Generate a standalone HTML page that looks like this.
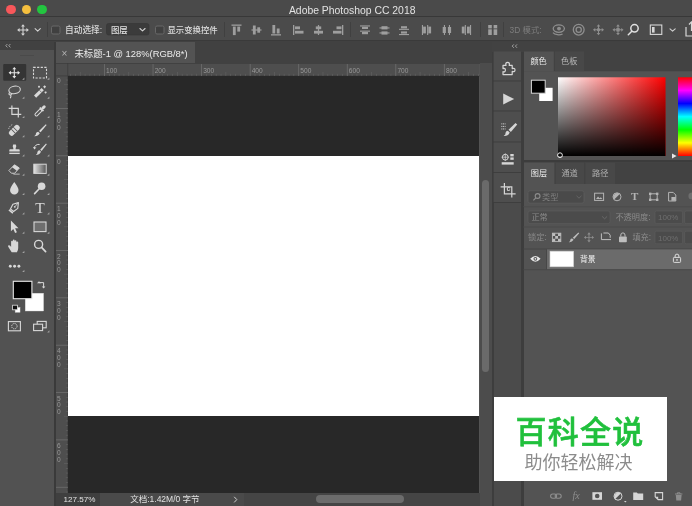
<!DOCTYPE html>
<html><head><meta charset="utf-8">
<style>
*{box-sizing:border-box;margin:0;padding:0}
html,body{width:692px;height:506px;overflow:hidden;background:#535353;font-family:"Liberation Sans","Noto Sans CJK SC",sans-serif;}
#root{position:relative;width:692px;height:506px;overflow:hidden;background:#535353;filter:blur(0.35px)}
.abs{position:absolute}
.t{position:absolute;white-space:nowrap;color:#ddd;font-size:9px;line-height:11px}
</style></head><body>
<div id="root">
<!-- title bar -->
<div class="abs" style="left:0;top:0;width:692px;height:17px;background:#4a4a4a;border-bottom:1px solid #383838"></div>
<div class="abs" style="left:6.4px;top:4.6px;width:9.8px;height:9.8px;border-radius:5px;background:#f8575a"></div>
<div class="abs" style="left:21.7px;top:4.6px;width:9.8px;height:9.8px;border-radius:5px;background:#f5bf3e"></div>
<div class="abs" style="left:37px;top:4.6px;width:9.8px;height:9.8px;border-radius:5px;background:#23c540"></div>
<div class="t" style="left:0;width:692px;text-align:center;padding-left:12.4px;top:4.5px;font-size:10.4px;color:#e2e2e2;line-height:12px">Adobe Photoshop CC 2018</div>
<!-- options bar -->
<div class="abs" style="left:0;top:17px;width:692px;height:24px;background:#4b4b4b;border-bottom:1px solid #3a3a3a"></div>
<svg class="abs" style="left:0px;top:0px" width="692" height="42" viewBox="0 0 692 42" ><g transform="translate(23,30) scale(0.9)" fill="#d4d4d4" stroke="none"><path d="M0-6.5 L2.2-3.8 H0.6 V-0.6 H3.8 V-2.2 L6.5 0 L3.8 2.2 V0.6 H0.6 V3.8 H2.2 L0 6.5 L-2.2 3.8 H-0.6 V0.6 H-3.8 V2.2 L-6.5 0 L-3.8-2.2 V-0.6 H-0.6 V-3.8 H-2.2 Z"/></g><path d="M35.1 28.7 L37.7 31.1 L40.300000000000004 28.7" fill="none" stroke="#d4d4d4" stroke-width="1.1" stroke-linecap="round" stroke-linejoin="round"/><rect x="47" y="22" width="1" height="15" fill="#404040"/><rect x="224" y="22" width="1" height="15" fill="#404040"/><rect x="350" y="22" width="1" height="15" fill="#404040"/><rect x="480" y="22" width="1" height="15" fill="#404040"/><rect x="503" y="22" width="1" height="15" fill="#404040"/><rect x="51.5" y="26" width="8.5" height="8" rx="1.5" fill="#404040" stroke="#686868" stroke-width="1"/><rect x="155.5" y="26" width="8.5" height="8" rx="1.5" fill="#404040" stroke="#686868" stroke-width="1"/><rect x="106.5" y="23.5" width="42.5" height="11.5" rx="2" fill="#3b3b3b" stroke="#363636" stroke-width="0.6"/><path d="M139.9 28.5 L142.5 30.900000000000002 L145.1 28.5" fill="none" stroke="#d4d4d4" stroke-width="1.1" stroke-linecap="round" stroke-linejoin="round"/><rect x="231.5" y="24.5" width="10" height="1.3" fill="#9e9e9e"/><rect x="232.9" y="26.6" width="2.8" height="8.5" fill="#9e9e9e"/><rect x="237.3" y="26.6" width="2.8" height="5" fill="#9e9e9e"/><rect x="251.5" y="29.4" width="10" height="1.2" fill="#9e9e9e"/><rect x="252.9" y="25.5" width="2.8" height="9" fill="#9e9e9e"/><rect x="257.3" y="27.3" width="2.8" height="5.4" fill="#9e9e9e"/><rect x="271" y="34.2" width="10" height="1.3" fill="#9e9e9e"/><rect x="272.4" y="25" width="2.8" height="8.5" fill="#9e9e9e"/><rect x="276.8" y="28.5" width="2.8" height="5" fill="#9e9e9e"/><rect x="293" y="25" width="1.3" height="10" fill="#9e9e9e"/><rect x="295" y="26.4" width="5" height="2.8" fill="#9e9e9e"/><rect x="295" y="30.8" width="8.5" height="2.8" fill="#9e9e9e"/><rect x="317.9" y="25" width="1.2" height="10" fill="#9e9e9e"/><rect x="315.8" y="26.4" width="5.4" height="2.8" fill="#9e9e9e"/><rect x="314.0" y="30.8" width="9" height="2.8" fill="#9e9e9e"/><rect x="342" y="25" width="1.3" height="10" fill="#9e9e9e"/><rect x="336.5" y="26.4" width="5" height="2.8" fill="#9e9e9e"/><rect x="333" y="30.8" width="8.5" height="2.8" fill="#9e9e9e"/><rect x="360" y="25.4" width="10" height="1.1" fill="#9e9e9e"/><rect x="362" y="26.8" width="6" height="2.2" fill="#9e9e9e"/><rect x="360" y="30.6" width="10" height="1.1" fill="#9e9e9e"/><rect x="362" y="32" width="6" height="2.2" fill="#9e9e9e"/><rect x="379.5" y="27.4" width="10" height="1.1" fill="#9e9e9e"/><rect x="381.5" y="26.2" width="6" height="3.2" fill="#9e9e9e"/><rect x="379.5" y="32.4" width="10" height="1.1" fill="#9e9e9e"/><rect x="381.5" y="31.4" width="6" height="3.2" fill="#9e9e9e"/><rect x="399" y="28.8" width="10" height="1.1" fill="#9e9e9e"/><rect x="401" y="26.2" width="6" height="2.2" fill="#9e9e9e"/><rect x="399" y="34" width="10" height="1.1" fill="#9e9e9e"/><rect x="401" y="31.4" width="6" height="2.2" fill="#9e9e9e"/><rect x="421.9" y="25" width="1.1" height="10" fill="#9e9e9e"/><rect x="423.1" y="26.6" width="2.8" height="6.8" fill="#9e9e9e"/><rect x="427.1" y="25" width="1.1" height="10" fill="#9e9e9e"/><rect x="428.3" y="26.6" width="2.8" height="6.8" fill="#9e9e9e"/><rect x="443.9" y="25" width="1.1" height="10" fill="#9e9e9e"/><rect x="442.7" y="27" width="3.2" height="6" fill="#9e9e9e"/><rect x="448.9" y="25" width="1.1" height="10" fill="#9e9e9e"/><rect x="447.9" y="27" width="3.2" height="6" fill="#9e9e9e"/><rect x="464.8" y="25" width="1.1" height="10" fill="#9e9e9e"/><rect x="461.8" y="26.6" width="2.8" height="6.8" fill="#9e9e9e"/><rect x="470" y="25" width="1.1" height="10" fill="#9e9e9e"/><rect x="467" y="26.6" width="2.8" height="6.8" fill="#9e9e9e"/><rect x="488.2" y="25" width="3.6" height="10" fill="#9e9e9e"/><rect x="493.59999999999997" y="25" width="3.6" height="10" fill="#9e9e9e"/><rect x="487.7" y="28.4" width="10" height="0.9" fill="#4c4c4c"/><g fill="none" stroke="#8e8e8e" stroke-width="1.3"><ellipse cx="558.8" cy="28.6" rx="5.6" ry="3.7"/><path d="M553 32.6 a6.4 4 0 0 0 9.6 1.4"/><circle cx="559" cy="28.6" r="1.3" fill="#8e8e8e"/></g><g fill="none" stroke="#8e8e8e" stroke-width="1.3"><circle cx="578.7" cy="29.7" r="5.4"/><circle cx="578.7" cy="29.7" r="2.6"/></g><g transform="translate(598.5,29.8) scale(0.85)" fill="#8e8e8e" stroke="none"><path d="M0-6.5 L2.2-3.8 H0.6 V-0.6 H3.8 V-2.2 L6.5 0 L3.8 2.2 V0.6 H0.6 V3.8 H2.2 L0 6.5 L-2.2 3.8 H-0.6 V0.6 H-3.8 V2.2 L-6.5 0 L-3.8-2.2 V-0.6 H-0.6 V-3.8 H-2.2 Z"/></g><circle cx="598.5" cy="29.8" r="1.8" fill="#8e8e8e"/><g transform="translate(618,29.8) scale(0.85)" fill="#8e8e8e" stroke="none"><path d="M0-6.5 L2.2-3.8 H0.6 V-0.6 H3.8 V-2.2 L6.5 0 L3.8 2.2 V0.6 H0.6 V3.8 H2.2 L0 6.5 L-2.2 3.8 H-0.6 V0.6 H-3.8 V2.2 L-6.5 0 L-3.8-2.2 V-0.6 H-0.6 V-3.8 H-2.2 Z"/></g><rect x="616.3" y="28.1" width="3.4" height="3.4" fill="#8e8e8e"/><g fill="none" stroke="#e0e0e0" stroke-width="1.5"><circle cx="634.5" cy="28.3" r="3.7"/><path d="M631.8 31.2 L628.3 34.8" stroke-linecap="round"/></g><rect x="650.3" y="25" width="11.5" height="9.4" fill="none" stroke="#d8d8d8" stroke-width="1.1"/><rect x="652" y="27" width="2.6" height="5.6" fill="#d8d8d8"/><path d="M670.0 28.8 L672.6 31.200000000000003 L675.2 28.8" fill="none" stroke="#cfcfcf" stroke-width="1.1" stroke-linecap="round" stroke-linejoin="round"/><path d="M686 27 V36 H692 M689 24.5 L691.5 21.8 L694 24.5" fill="none" stroke="#d8d8d8" stroke-width="1.2"/><rect x="690.9" y="22" width="1.2" height="9" fill="#d8d8d8"/></svg>
<div class="t" style="left:65px;top:24.5px;font-size:8.7px;font-weight:500;color:#dcdcdc">自动选择:</div>
<div class="t" style="left:111px;top:24.5px;font-size:8.4px;font-weight:500;color:#e2e2e2">图层</div>
<div class="t" style="left:167.5px;top:24.5px;font-size:8.4px;font-weight:500;color:#dcdcdc">显示变换控件</div>
<div class="t" style="left:509.5px;top:24.5px;font-size:8.4px;color:#7d7d7d">3D 模式:</div>
<!-- tab bar -->
<div class="abs" style="left:0;top:41px;width:692px;height:23px;background:#414141"></div>
<!-- toolbar -->
<div class="abs" style="left:0;top:42px;width:54.3px;height:464px;background:#525252"></div>
<div class="abs" style="left:0;top:42px;width:54.3px;height:7.6px;background:#414141"></div>
<div class="abs" style="left:54.3px;top:42px;width:1.4px;height:464px;background:#3a3a3a"></div>
<svg class="abs" style="left:0px;top:0px" width="56" height="340" viewBox="0 0 56 340" ><path d="M7.4 44 L5.8 45.7 L7.4 47.4 M10.4 44 L8.8 45.7 L10.4 47.4" fill="none" stroke="#b5b5b5" stroke-width="0.8"/><rect x="20" y="55" width="14" height="1" fill="#4a4a4a"/><rect x="3.2" y="64" width="23" height="16.8" rx="1" fill="#343434"/><path d="M24.4 77.5 V79.7 H22.2 Z" fill="#a4a4a4"/><path d="M49.4 77.5 V79.7 H47.199999999999996 Z" fill="#a4a4a4"/><path d="M24.4 96.6 V98.8 H22.2 Z" fill="#a4a4a4"/><path d="M49.4 96.6 V98.8 H47.199999999999996 Z" fill="#a4a4a4"/><path d="M24.4 115.8 V118 H22.2 Z" fill="#a4a4a4"/><path d="M49.4 115.8 V118 H47.199999999999996 Z" fill="#a4a4a4"/><path d="M24.4 135.10000000000002 V137.3 H22.2 Z" fill="#a4a4a4"/><path d="M49.4 135.10000000000002 V137.3 H47.199999999999996 Z" fill="#a4a4a4"/><path d="M24.4 154.3 V156.5 H22.2 Z" fill="#a4a4a4"/><path d="M49.4 154.3 V156.5 H47.199999999999996 Z" fill="#a4a4a4"/><path d="M24.4 173.60000000000002 V175.8 H22.2 Z" fill="#a4a4a4"/><path d="M49.4 173.60000000000002 V175.8 H47.199999999999996 Z" fill="#a4a4a4"/><path d="M24.4 192.8 V195 H22.2 Z" fill="#a4a4a4"/><path d="M49.4 192.8 V195 H47.199999999999996 Z" fill="#a4a4a4"/><path d="M24.4 212.3 V214.5 H22.2 Z" fill="#a4a4a4"/><path d="M49.4 212.3 V214.5 H47.199999999999996 Z" fill="#a4a4a4"/><path d="M24.4 231.60000000000002 V233.8 H22.2 Z" fill="#a4a4a4"/><path d="M49.4 231.60000000000002 V233.8 H47.199999999999996 Z" fill="#a4a4a4"/><path d="M24.4 250.8 V253 H22.2 Z" fill="#a4a4a4"/><g transform="translate(14.3,72.7) scale(0.88)" fill="#e6e6e6" stroke="none"><path d="M0-6.5 L2.2-3.8 H0.6 V-0.6 H3.8 V-2.2 L6.5 0 L3.8 2.2 V0.6 H0.6 V3.8 H2.2 L0 6.5 L-2.2 3.8 H-0.6 V0.6 H-3.8 V2.2 L-6.5 0 L-3.8-2.2 V-0.6 H-0.6 V-3.8 H-2.2 Z"/></g><rect x="33.5" y="67.4" width="13" height="10.6" fill="none" stroke="#d8d8d8" stroke-width="1.1" stroke-dasharray="2.2 1.4"/><g fill="none" stroke="#d8d8d8" stroke-width="1.1"><ellipse cx="14.9" cy="90.0" rx="5.8" ry="3.7" transform="rotate(-10 14.3 91.8)"/><path d="M9.700000000000001 92.39999999999999 q-1.6 2 0.4 2.6 q1.6 0.2 1.2 -1.6 M10.700000000000001 94.8 q0.6 1.8 -0.4 3.4"/></g><g transform="translate(40,91.8)"><path d="M-6 3.8 L1.6 -3.8 L3.8 -1.6 L-3.8 6 Z" fill="#d8d8d8"/><path d="M-0.6 -1.6 L1.6 0.6" stroke="#535353" stroke-width="0.7"/><path d="M4.6 -6.4 v2.8 M3.2 -5 h2.8 M-1 -6 v2 M-2 -5 h2 M5.6 -0.4 v2 M4.6 0.6 h2" stroke="#d8d8d8" stroke-width="1.1" fill="none"/></g><g fill="none" stroke="#d8d8d8" stroke-width="1.2"><path d="M11.9 105.4 V114.4 H21.3"/><path d="M8.700000000000001 108.4 H18.3 V117.4"/></g><g transform="translate(40,111) rotate(45)"><rect x="-1.4" y="-1.6" width="2.8" height="8" rx="1.2" fill="none" stroke="#d8d8d8" stroke-width="1"/><rect x="-2.6" y="-3.2" width="5.2" height="1.8" fill="#d8d8d8"/><rect x="-1.5" y="-7.4" width="3" height="4.6" rx="1.4" fill="#d8d8d8"/></g><g transform="translate(14.3,130.3) rotate(-45)"><rect x="-6.4" y="-2.8" width="12.8" height="5.6" rx="2.4" fill="#d8d8d8"/><rect x="-1.8" y="-2.8" width="0.9" height="5.6" fill="#535353"/><rect x="1" y="-2.8" width="0.9" height="5.6" fill="#535353"/></g><path d="M8.700000000000001 128.9 a6 6 0 0 1 4 -4.4" fill="none" stroke="#d8d8d8" stroke-width="0.9" stroke-dasharray="1.2 1"/><g transform="translate(40,130.3)"><path d="M5.8 -6 L6.6 -5.2 L0.6 2 L-1 0.6 Z" fill="#d8d8d8"/><path d="M-1.8 1.4 L-0.2 3 Q-2 6.2 -5.8 6 Q-3.6 4.6 -4 3 Q-3.6 1.4 -1.8 1.4Z" fill="#d8d8d8"/></g><g transform="translate(14.5,149.5) scale(0.84)" fill="#d8d8d8"><path d="M-1.6 -6 h3.2 q1.2 2 -0.2 4.2 v1.6 h3.8 q1 0 1 1 v1.6 h-12.4 v-1.6 q0 -1 1 -1 h3.8 v-1.6 q-1.4 -2.2 -0.2 -4.2Z"/><rect x="-6.2" y="3.8" width="12.4" height="1.6"/></g><g transform="translate(40.6,149.5)"><path d="M5.4 -6 L6.2 -5.2 L1 1.4 L-0.4 0.2 Z" fill="#d8d8d8"/><path d="M-1 0.8 L0.4 2.2 Q-1.2 5.4 -4.8 5.4 Q-2.8 4 -3.2 2.6 Q-2.8 0.8 -1 0.8Z" fill="#d8d8d8"/><path d="M-6.4 -1.4 a4.4 4.4 0 0 1 5.4 -3.6" fill="none" stroke="#d8d8d8" stroke-width="1"/><path d="M-7.6 -2.6 l1.4 2.6 l2 -2 Z" fill="#d8d8d8"/></g><g transform="translate(14.3,169.10000000000002) scale(0.9)"><path d="M-6 1.6 L0.2 -4.8 L5.6 -1.2 L0.4 4.6 L-3.2 4.6 Z" fill="none" stroke="#d8d8d8" stroke-width="1"/><path d="M-2.4 -2 L0.2 -4.8 L5.6 -1.2 L2.8 1.8Z" fill="#d8d8d8"/><path d="M-1 5.6 H6" stroke="#d8d8d8" stroke-width="0.9"/></g><defs><linearGradient id="gtool" x1="0" x2="1"><stop offset="0" stop-color="#e4e4e4"/><stop offset="1" stop-color="#565656"/></linearGradient></defs><rect x="33.8" y="164.20000000000002" width="12.4" height="9.2" fill="url(#gtool)" stroke="#d8d8d8" stroke-width="1"/><path d="M14.3 182 Q18.9 188.2 18.5 190.4 A4.2 4.2 0 0 1 10.100000000000001 190.4 Q9.700000000000001 188.2 14.3 182Z" fill="#d8d8d8"/><g transform="translate(40,188)"><circle cx="1.6" cy="-1.8" r="3.8" fill="#d8d8d8"/><path d="M-1 1 L-5.4 5.6" stroke="#d8d8d8" stroke-width="1.6" stroke-linecap="round"/></g><g transform="translate(14.3,207.5) rotate(40)"><path d="M0 -6.4 L3.2 -1.6 L2 3.6 H-2 L-3.2 -1.6 Z" fill="none" stroke="#d8d8d8" stroke-width="1.1" stroke-linejoin="round"/><path d="M0 -6 V-1.4" stroke="#d8d8d8" stroke-width="0.8"/><circle cx="0" cy="-0.8" r="0.9" fill="#d8d8d8"/><rect x="-2.6" y="4.4" width="5.2" height="1.6" fill="#d8d8d8"/></g><path d="M10.9 220.60000000000002 L18.5 228.20000000000002 H15.100000000000001 L16.900000000000002 232.20000000000002 L15.100000000000001 233.0 L13.3 229.0 L10.9 231.20000000000002Z" fill="#d8d8d8"/><rect x="34" y="222.0" width="12" height="9.6" fill="#6e6e6e" stroke="#d8d8d8" stroke-width="1.1"/><g transform="translate(14.3,246)" fill="#d8d8d8"><path d="M-2.6 6.2 Q-4.6 3.4 -6.2 0.6 Q-6.6 -0.8 -5.2 -0.8 Q-4 -0.6 -3.2 1 V-4.2 Q-3.2 -5.2 -2.3 -5.2 Q-1.5 -5.2 -1.5 -4.2 V-5.4 Q-1.5 -6.4 -0.6 -6.4 Q0.3 -6.4 0.3 -5.4 V-4.8 Q0.3 -5.8 1.2 -5.8 Q2.1 -5.8 2.1 -4.8 V-3.6 Q2.1 -4.6 3 -4.6 Q3.9 -4.6 3.9 -3.6 V2 Q3.9 4.4 2.6 6.2Z"/></g><g fill="none" stroke="#d8d8d8" stroke-width="1.4"><circle cx="38.6" cy="244.4" r="4"/><path d="M41.6 247.4 L45.6 251.6" stroke-linecap="round" stroke-width="1.7"/></g><circle cx="10.3" cy="266.3" r="1.45" fill="#d8d8d8"/><circle cx="14.6" cy="266.3" r="1.45" fill="#d8d8d8"/><circle cx="18.9" cy="266.3" r="1.45" fill="#d8d8d8"/><path d="M24.4 269.8 V272 H22.2 Z" fill="#a4a4a4"/><rect x="25.2" y="293.2" width="18.4" height="17.8" fill="#fff" stroke="#d0d0d0" stroke-width="0.4"/><rect x="13.3" y="281.3" width="18.6" height="17.4" fill="#000" stroke="#e6e6e6" stroke-width="1.1"/><path d="M39 281.2 l-2 2 h4 Z M43.6 288.6 l-1.8 -2 h3.6 Z" fill="#d8d8d8"/><path d="M39 282.6 h4.6 v4.4" fill="none" stroke="#d8d8d8" stroke-width="1"/><rect x="15.2" y="307.6" width="4.8" height="4.6" fill="#fff" stroke="#ddd" stroke-width="0.5"/><rect x="12.6" y="305.2" width="4.8" height="4.6" fill="#111" stroke="#e0e0e0" stroke-width="0.8"/><rect x="8.4" y="321.6" width="12" height="9.2" fill="none" stroke="#d8d8d8" stroke-width="1.1"/><circle cx="14.4" cy="326.2" r="2.7" fill="none" stroke="#d8d8d8" stroke-width="1" stroke-dasharray="1.2 0.9"/><rect x="37.2" y="321.4" width="9" height="6.4" fill="#535353" stroke="#d8d8d8" stroke-width="1.1"/><rect x="33.6" y="324.2" width="9" height="6.4" fill="#535353" stroke="#d8d8d8" stroke-width="1.1"/><path d="M49.4 330.3 V332.5 H47.199999999999996 Z" fill="#a4a4a4"/></svg>
<div class="t" style="left:34px;top:198.5px;font-family:'Liberation Serif',serif;font-size:15.5px;line-height:18px;color:#d8d8d8;width:12px;text-align:center">T</div>
<!-- doc tab -->
<div class="abs" style="left:56px;top:42px;width:139px;height:21px;background:#535353"></div>
<div class="t" style="left:61.6px;top:47.6px;font-size:10px;color:#b4b4b4">×</div>
<div class="t" style="left:74.4px;top:47.8px;font-size:9.4px;color:#ececec">未标题-1 @ 128%(RGB/8*)</div>
<!-- rulers -->
<div class="abs" style="left:55.7px;top:63.7px;width:423.7px;height:12.3px;background:#4e4e4e"></div>
<div class="abs" style="left:55.7px;top:64px;width:12.3px;height:429.4px;background:#4e4e4e"></div>
<svg class="abs" style="left:0px;top:0px" width="492" height="506" viewBox="0 0 492 506" ><rect x="56" y="75.5" width="424" height="0.8" fill="#3d3d3d"/><rect x="67.4" y="63" width="0.8" height="430" fill="#3d3d3d"/><rect x="70.22" y="73.8" width="0.6" height="2.2" fill="#636363"/><rect x="75.07" y="73.8" width="0.6" height="2.2" fill="#636363"/><rect x="79.92" y="72" width="0.6" height="4" fill="#636363"/><rect x="84.78" y="73.8" width="0.6" height="2.2" fill="#636363"/><rect x="89.64" y="73.8" width="0.6" height="2.2" fill="#636363"/><rect x="94.49" y="73.8" width="0.6" height="2.2" fill="#636363"/><rect x="99.35" y="73.8" width="0.6" height="2.2" fill="#636363"/><rect x="104.10" y="64" width="0.8" height="12" fill="#6e6e6e"/><rect x="109.06" y="73.8" width="0.6" height="2.2" fill="#636363"/><rect x="113.91" y="73.8" width="0.6" height="2.2" fill="#636363"/><rect x="118.77" y="73.8" width="0.6" height="2.2" fill="#636363"/><rect x="123.62" y="73.8" width="0.6" height="2.2" fill="#636363"/><rect x="128.47" y="72" width="0.6" height="4" fill="#636363"/><rect x="133.33" y="73.8" width="0.6" height="2.2" fill="#636363"/><rect x="138.19" y="73.8" width="0.6" height="2.2" fill="#636363"/><rect x="143.04" y="73.8" width="0.6" height="2.2" fill="#636363"/><rect x="147.89" y="73.8" width="0.6" height="2.2" fill="#636363"/><rect x="152.65" y="64" width="0.8" height="12" fill="#6e6e6e"/><rect x="157.60" y="73.8" width="0.6" height="2.2" fill="#636363"/><rect x="162.46" y="73.8" width="0.6" height="2.2" fill="#636363"/><rect x="167.31" y="73.8" width="0.6" height="2.2" fill="#636363"/><rect x="172.17" y="73.8" width="0.6" height="2.2" fill="#636363"/><rect x="177.03" y="72" width="0.6" height="4" fill="#636363"/><rect x="181.88" y="73.8" width="0.6" height="2.2" fill="#636363"/><rect x="186.74" y="73.8" width="0.6" height="2.2" fill="#636363"/><rect x="191.59" y="73.8" width="0.6" height="2.2" fill="#636363"/><rect x="196.44" y="73.8" width="0.6" height="2.2" fill="#636363"/><rect x="201.20" y="64" width="0.8" height="12" fill="#6e6e6e"/><rect x="206.15" y="73.8" width="0.6" height="2.2" fill="#636363"/><rect x="211.01" y="73.8" width="0.6" height="2.2" fill="#636363"/><rect x="215.86" y="73.8" width="0.6" height="2.2" fill="#636363"/><rect x="220.72" y="73.8" width="0.6" height="2.2" fill="#636363"/><rect x="225.57" y="72" width="0.6" height="4" fill="#636363"/><rect x="230.43" y="73.8" width="0.6" height="2.2" fill="#636363"/><rect x="235.28" y="73.8" width="0.6" height="2.2" fill="#636363"/><rect x="240.14" y="73.8" width="0.6" height="2.2" fill="#636363"/><rect x="244.99" y="73.8" width="0.6" height="2.2" fill="#636363"/><rect x="249.75" y="64" width="0.8" height="12" fill="#6e6e6e"/><rect x="254.70" y="73.8" width="0.6" height="2.2" fill="#636363"/><rect x="259.56" y="73.8" width="0.6" height="2.2" fill="#636363"/><rect x="264.41" y="73.8" width="0.6" height="2.2" fill="#636363"/><rect x="269.27" y="73.8" width="0.6" height="2.2" fill="#636363"/><rect x="274.12" y="72" width="0.6" height="4" fill="#636363"/><rect x="278.98" y="73.8" width="0.6" height="2.2" fill="#636363"/><rect x="283.83" y="73.8" width="0.6" height="2.2" fill="#636363"/><rect x="288.69" y="73.8" width="0.6" height="2.2" fill="#636363"/><rect x="293.54" y="73.8" width="0.6" height="2.2" fill="#636363"/><rect x="298.30" y="64" width="0.8" height="12" fill="#6e6e6e"/><rect x="303.25" y="73.8" width="0.6" height="2.2" fill="#636363"/><rect x="308.11" y="73.8" width="0.6" height="2.2" fill="#636363"/><rect x="312.96" y="73.8" width="0.6" height="2.2" fill="#636363"/><rect x="317.82" y="73.8" width="0.6" height="2.2" fill="#636363"/><rect x="322.67" y="72" width="0.6" height="4" fill="#636363"/><rect x="327.53" y="73.8" width="0.6" height="2.2" fill="#636363"/><rect x="332.38" y="73.8" width="0.6" height="2.2" fill="#636363"/><rect x="337.24" y="73.8" width="0.6" height="2.2" fill="#636363"/><rect x="342.09" y="73.8" width="0.6" height="2.2" fill="#636363"/><rect x="346.85" y="64" width="0.8" height="12" fill="#6e6e6e"/><rect x="351.80" y="73.8" width="0.6" height="2.2" fill="#636363"/><rect x="356.66" y="73.8" width="0.6" height="2.2" fill="#636363"/><rect x="361.51" y="73.8" width="0.6" height="2.2" fill="#636363"/><rect x="366.37" y="73.8" width="0.6" height="2.2" fill="#636363"/><rect x="371.22" y="72" width="0.6" height="4" fill="#636363"/><rect x="376.08" y="73.8" width="0.6" height="2.2" fill="#636363"/><rect x="380.93" y="73.8" width="0.6" height="2.2" fill="#636363"/><rect x="385.79" y="73.8" width="0.6" height="2.2" fill="#636363"/><rect x="390.64" y="73.8" width="0.6" height="2.2" fill="#636363"/><rect x="395.40" y="64" width="0.8" height="12" fill="#6e6e6e"/><rect x="400.35" y="73.8" width="0.6" height="2.2" fill="#636363"/><rect x="405.21" y="73.8" width="0.6" height="2.2" fill="#636363"/><rect x="410.06" y="73.8" width="0.6" height="2.2" fill="#636363"/><rect x="414.92" y="73.8" width="0.6" height="2.2" fill="#636363"/><rect x="419.77" y="72" width="0.6" height="4" fill="#636363"/><rect x="424.63" y="73.8" width="0.6" height="2.2" fill="#636363"/><rect x="429.48" y="73.8" width="0.6" height="2.2" fill="#636363"/><rect x="434.34" y="73.8" width="0.6" height="2.2" fill="#636363"/><rect x="439.19" y="73.8" width="0.6" height="2.2" fill="#636363"/><rect x="443.95" y="64" width="0.8" height="12" fill="#6e6e6e"/><rect x="448.90" y="73.8" width="0.6" height="2.2" fill="#636363"/><rect x="453.76" y="73.8" width="0.6" height="2.2" fill="#636363"/><rect x="458.61" y="73.8" width="0.6" height="2.2" fill="#636363"/><rect x="463.47" y="73.8" width="0.6" height="2.2" fill="#636363"/><rect x="468.32" y="72" width="0.6" height="4" fill="#636363"/><rect x="473.18" y="73.8" width="0.6" height="2.2" fill="#636363"/><rect x="478.03" y="73.8" width="0.6" height="2.2" fill="#636363"/><rect x="65.8" y="79.74" width="2.2" height="0.6" fill="#636363"/><rect x="64" y="84.48" width="4" height="0.6" fill="#636363"/><rect x="65.8" y="89.21" width="2.2" height="0.6" fill="#636363"/><rect x="65.8" y="93.95" width="2.2" height="0.6" fill="#636363"/><rect x="65.8" y="98.68" width="2.2" height="0.6" fill="#636363"/><rect x="65.8" y="103.42" width="2.2" height="0.6" fill="#636363"/><rect x="56" y="108.05" width="12" height="0.8" fill="#6e6e6e"/><rect x="65.8" y="112.89" width="2.2" height="0.6" fill="#636363"/><rect x="65.8" y="117.62" width="2.2" height="0.6" fill="#636363"/><rect x="65.8" y="122.36" width="2.2" height="0.6" fill="#636363"/><rect x="65.8" y="127.09" width="2.2" height="0.6" fill="#636363"/><rect x="64" y="131.83" width="4" height="0.6" fill="#636363"/><rect x="65.8" y="136.56" width="2.2" height="0.6" fill="#636363"/><rect x="65.8" y="141.30" width="2.2" height="0.6" fill="#636363"/><rect x="65.8" y="146.03" width="2.2" height="0.6" fill="#636363"/><rect x="65.8" y="150.77" width="2.2" height="0.6" fill="#636363"/><rect x="56" y="155.40" width="12" height="0.8" fill="#6e6e6e"/><rect x="65.8" y="160.24" width="2.2" height="0.6" fill="#636363"/><rect x="65.8" y="164.97" width="2.2" height="0.6" fill="#636363"/><rect x="65.8" y="169.71" width="2.2" height="0.6" fill="#636363"/><rect x="65.8" y="174.44" width="2.2" height="0.6" fill="#636363"/><rect x="64" y="179.18" width="4" height="0.6" fill="#636363"/><rect x="65.8" y="183.91" width="2.2" height="0.6" fill="#636363"/><rect x="65.8" y="188.64" width="2.2" height="0.6" fill="#636363"/><rect x="65.8" y="193.38" width="2.2" height="0.6" fill="#636363"/><rect x="65.8" y="198.12" width="2.2" height="0.6" fill="#636363"/><rect x="56" y="202.75" width="12" height="0.8" fill="#6e6e6e"/><rect x="65.8" y="207.59" width="2.2" height="0.6" fill="#636363"/><rect x="65.8" y="212.32" width="2.2" height="0.6" fill="#636363"/><rect x="65.8" y="217.06" width="2.2" height="0.6" fill="#636363"/><rect x="65.8" y="221.79" width="2.2" height="0.6" fill="#636363"/><rect x="64" y="226.53" width="4" height="0.6" fill="#636363"/><rect x="65.8" y="231.26" width="2.2" height="0.6" fill="#636363"/><rect x="65.8" y="236.00" width="2.2" height="0.6" fill="#636363"/><rect x="65.8" y="240.73" width="2.2" height="0.6" fill="#636363"/><rect x="65.8" y="245.47" width="2.2" height="0.6" fill="#636363"/><rect x="56" y="250.10" width="12" height="0.8" fill="#6e6e6e"/><rect x="65.8" y="254.94" width="2.2" height="0.6" fill="#636363"/><rect x="65.8" y="259.67" width="2.2" height="0.6" fill="#636363"/><rect x="65.8" y="264.40" width="2.2" height="0.6" fill="#636363"/><rect x="65.8" y="269.14" width="2.2" height="0.6" fill="#636363"/><rect x="64" y="273.88" width="4" height="0.6" fill="#636363"/><rect x="65.8" y="278.61" width="2.2" height="0.6" fill="#636363"/><rect x="65.8" y="283.34" width="2.2" height="0.6" fill="#636363"/><rect x="65.8" y="288.08" width="2.2" height="0.6" fill="#636363"/><rect x="65.8" y="292.81" width="2.2" height="0.6" fill="#636363"/><rect x="56" y="297.45" width="12" height="0.8" fill="#6e6e6e"/><rect x="65.8" y="302.29" width="2.2" height="0.6" fill="#636363"/><rect x="65.8" y="307.02" width="2.2" height="0.6" fill="#636363"/><rect x="65.8" y="311.75" width="2.2" height="0.6" fill="#636363"/><rect x="65.8" y="316.49" width="2.2" height="0.6" fill="#636363"/><rect x="64" y="321.23" width="4" height="0.6" fill="#636363"/><rect x="65.8" y="325.96" width="2.2" height="0.6" fill="#636363"/><rect x="65.8" y="330.69" width="2.2" height="0.6" fill="#636363"/><rect x="65.8" y="335.43" width="2.2" height="0.6" fill="#636363"/><rect x="65.8" y="340.17" width="2.2" height="0.6" fill="#636363"/><rect x="56" y="344.80" width="12" height="0.8" fill="#6e6e6e"/><rect x="65.8" y="349.64" width="2.2" height="0.6" fill="#636363"/><rect x="65.8" y="354.37" width="2.2" height="0.6" fill="#636363"/><rect x="65.8" y="359.11" width="2.2" height="0.6" fill="#636363"/><rect x="65.8" y="363.84" width="2.2" height="0.6" fill="#636363"/><rect x="64" y="368.58" width="4" height="0.6" fill="#636363"/><rect x="65.8" y="373.31" width="2.2" height="0.6" fill="#636363"/><rect x="65.8" y="378.05" width="2.2" height="0.6" fill="#636363"/><rect x="65.8" y="382.78" width="2.2" height="0.6" fill="#636363"/><rect x="65.8" y="387.52" width="2.2" height="0.6" fill="#636363"/><rect x="56" y="392.15" width="12" height="0.8" fill="#6e6e6e"/><rect x="65.8" y="396.99" width="2.2" height="0.6" fill="#636363"/><rect x="65.8" y="401.72" width="2.2" height="0.6" fill="#636363"/><rect x="65.8" y="406.45" width="2.2" height="0.6" fill="#636363"/><rect x="65.8" y="411.19" width="2.2" height="0.6" fill="#636363"/><rect x="64" y="415.93" width="4" height="0.6" fill="#636363"/><rect x="65.8" y="420.66" width="2.2" height="0.6" fill="#636363"/><rect x="65.8" y="425.39" width="2.2" height="0.6" fill="#636363"/><rect x="65.8" y="430.13" width="2.2" height="0.6" fill="#636363"/><rect x="65.8" y="434.87" width="2.2" height="0.6" fill="#636363"/><rect x="56" y="439.50" width="12" height="0.8" fill="#6e6e6e"/><rect x="65.8" y="444.34" width="2.2" height="0.6" fill="#636363"/><rect x="65.8" y="449.07" width="2.2" height="0.6" fill="#636363"/><rect x="65.8" y="453.81" width="2.2" height="0.6" fill="#636363"/><rect x="65.8" y="458.54" width="2.2" height="0.6" fill="#636363"/><rect x="64" y="463.28" width="4" height="0.6" fill="#636363"/><rect x="65.8" y="468.01" width="2.2" height="0.6" fill="#636363"/><rect x="65.8" y="472.75" width="2.2" height="0.6" fill="#636363"/><rect x="65.8" y="477.48" width="2.2" height="0.6" fill="#636363"/><rect x="65.8" y="482.22" width="2.2" height="0.6" fill="#636363"/><rect x="56" y="486.85" width="12" height="0.8" fill="#6e6e6e"/><rect x="65.8" y="491.69" width="2.2" height="0.6" fill="#636363"/></svg>
<div class="t" style="left:106.1px;top:66.8px;font-size:6.6px;line-height:8px;color:#989898">100</div>
<div class="t" style="left:154.7px;top:66.8px;font-size:6.6px;line-height:8px;color:#989898">200</div>
<div class="t" style="left:203.2px;top:66.8px;font-size:6.6px;line-height:8px;color:#989898">300</div>
<div class="t" style="left:251.7px;top:66.8px;font-size:6.6px;line-height:8px;color:#989898">400</div>
<div class="t" style="left:300.3px;top:66.8px;font-size:6.6px;line-height:8px;color:#989898">500</div>
<div class="t" style="left:348.8px;top:66.8px;font-size:6.6px;line-height:8px;color:#989898">600</div>
<div class="t" style="left:397.4px;top:66.8px;font-size:6.6px;line-height:8px;color:#989898">700</div>
<div class="t" style="left:445.9px;top:66.8px;font-size:6.6px;line-height:8px;color:#989898">800</div>
<div class="t" style="left:54.8px;top:76.9px;font-size:6.6px;line-height:7px;color:#989898;width:8px;text-align:center">0</div>
<div class="t" style="left:54.8px;top:110.5px;font-size:6.6px;line-height:7px;color:#989898;width:8px;text-align:center">1</div><div class="t" style="left:54.8px;top:117.4px;font-size:6.6px;line-height:7px;color:#989898;width:8px;text-align:center">0</div><div class="t" style="left:54.8px;top:124.3px;font-size:6.6px;line-height:7px;color:#989898;width:8px;text-align:center">0</div>
<div class="t" style="left:54.8px;top:157.8px;font-size:6.6px;line-height:7px;color:#989898;width:8px;text-align:center">0</div>
<div class="t" style="left:54.8px;top:205.2px;font-size:6.6px;line-height:7px;color:#989898;width:8px;text-align:center">1</div><div class="t" style="left:54.8px;top:212.1px;font-size:6.6px;line-height:7px;color:#989898;width:8px;text-align:center">0</div><div class="t" style="left:54.8px;top:219.0px;font-size:6.6px;line-height:7px;color:#989898;width:8px;text-align:center">0</div>
<div class="t" style="left:54.8px;top:252.5px;font-size:6.6px;line-height:7px;color:#989898;width:8px;text-align:center">2</div><div class="t" style="left:54.8px;top:259.4px;font-size:6.6px;line-height:7px;color:#989898;width:8px;text-align:center">0</div><div class="t" style="left:54.8px;top:266.3px;font-size:6.6px;line-height:7px;color:#989898;width:8px;text-align:center">0</div>
<div class="t" style="left:54.8px;top:299.9px;font-size:6.6px;line-height:7px;color:#989898;width:8px;text-align:center">3</div><div class="t" style="left:54.8px;top:306.8px;font-size:6.6px;line-height:7px;color:#989898;width:8px;text-align:center">0</div><div class="t" style="left:54.8px;top:313.7px;font-size:6.6px;line-height:7px;color:#989898;width:8px;text-align:center">0</div>
<div class="t" style="left:54.8px;top:347.2px;font-size:6.6px;line-height:7px;color:#989898;width:8px;text-align:center">4</div><div class="t" style="left:54.8px;top:354.1px;font-size:6.6px;line-height:7px;color:#989898;width:8px;text-align:center">0</div><div class="t" style="left:54.8px;top:361.0px;font-size:6.6px;line-height:7px;color:#989898;width:8px;text-align:center">0</div>
<div class="t" style="left:54.8px;top:394.6px;font-size:6.6px;line-height:7px;color:#989898;width:8px;text-align:center">5</div><div class="t" style="left:54.8px;top:401.4px;font-size:6.6px;line-height:7px;color:#989898;width:8px;text-align:center">0</div><div class="t" style="left:54.8px;top:408.4px;font-size:6.6px;line-height:7px;color:#989898;width:8px;text-align:center">0</div>
<div class="t" style="left:54.8px;top:441.9px;font-size:6.6px;line-height:7px;color:#989898;width:8px;text-align:center">6</div><div class="t" style="left:54.8px;top:448.8px;font-size:6.6px;line-height:7px;color:#989898;width:8px;text-align:center">0</div><div class="t" style="left:54.8px;top:455.7px;font-size:6.6px;line-height:7px;color:#989898;width:8px;text-align:center">0</div>

<!-- canvas area -->
<div class="abs" style="left:68px;top:76px;width:411.4px;height:417.4px;background:#282828"></div>
<div class="abs" style="left:68px;top:155.6px;width:411.3px;height:260.4px;background:#fff"></div>
<!-- vscroll -->
<div class="abs" style="left:479.6px;top:63.4px;width:12px;height:430px;background:#4c4c4c"></div>
<div class="abs" style="left:482px;top:180px;width:7px;height:192px;border-radius:4px;background:#6a6a6a"></div>
<!-- status bar -->
<div class="abs" style="left:56px;top:493.4px;width:436px;height:13px;background:#454545"></div>
<div class="abs" style="left:56px;top:493.4px;width:44px;height:13px;background:#3f3f3f"></div>
<div class="abs" style="left:100px;top:493.4px;width:144px;height:13px;background:#4a4a4a"></div>
<div class="abs" style="left:480px;top:493px;width:12px;height:13px;background:#4c4c4c"></div>
<div class="t" style="left:63.4px;top:494px;font-size:8.1px;color:#e0e0e0">127.57%</div>
<div class="t" style="left:130.2px;top:494px;font-size:8.5px;color:#e0e0e0">文档:1.42M/0 字节</div>
<svg class="abs" style="left:230px;top:494px" width="12" height="12" viewBox="0 0 12 12"><path d="M4.2 2.8 L6.8 5.6 L4.2 8.4" fill="none" stroke="#cfcfcf" stroke-width="1"/></svg>
<div class="abs" style="left:316.4px;top:495.4px;width:88px;height:7.6px;border-radius:4px;background:#6c6c6c"></div>
<!-- right dock -->
<div class="abs" style="left:492px;top:42px;width:200px;height:464px;background:#3d3d3d"></div>
<div class="abs" style="left:492px;top:42px;width:200px;height:9.5px;background:#424242"></div>
<div class="abs" style="left:493.6px;top:51.5px;width:27.4px;height:454.5px;background:#4b4b4b"></div>
<div class="abs" style="left:524px;top:52px;width:168px;height:454px;background:#535353"></div>
<svg class="abs" style="left:0px;top:0px" width="692" height="506" viewBox="0 0 692 506" ><path d="M513.8 44.4 L512.2 46.1 L513.8 47.8 M517 44.4 L515.4 46.1 L517 47.8" fill="none" stroke="#b5b5b5" stroke-width="0.8"/><rect x="493.6" y="51.5" width="27.4" height="29.099999999999994" fill="#4e4e4e"/><rect x="493.6" y="80.6" width="27.4" height="1" fill="#3e3e3e"/><rect x="493.6" y="81.6" width="27.4" height="29.0" fill="#4e4e4e"/><rect x="493.6" y="110.6" width="27.4" height="1" fill="#3e3e3e"/><rect x="493.6" y="111.6" width="27.4" height="30.0" fill="#4e4e4e"/><rect x="493.6" y="141.6" width="27.4" height="1" fill="#3e3e3e"/><rect x="493.6" y="142.6" width="27.4" height="29.400000000000006" fill="#4e4e4e"/><rect x="493.6" y="172" width="27.4" height="1" fill="#3e3e3e"/><rect x="493.6" y="173" width="27.4" height="29" fill="#4e4e4e"/><rect x="493.6" y="202" width="27.4" height="1" fill="#3e3e3e"/><path d="M503 65.4 h3 q-0.8 -3 1.6 -3 q2.4 0 1.6 3 h3 v3.2 q2.8 -0.8 2.8 1.4 q0 2.2 -2.8 1.4 v3.2 h-9.2 v-3 q2.4 0.8 2.4 -1.5 q0 -2.2 -2.4 -1.5 Z" fill="none" stroke="#d6d6d6" stroke-width="1.2" stroke-linejoin="round"/><path d="M503.2 93.6 L514.2 99 L503.2 104.4 Z" fill="#d6d6d6"/><g transform="translate(509.8,129.6) scale(1.06)"><path d="M5.4 -6.2 L7 -4.8 L1 2.2 L-1.2 0.2 Z" fill="#d6d6d6"/><path d="M-1.8 1.2 L0 3 Q-2 6.4 -5.8 6 Q-3.6 4.6 -4 3 Q-3.6 1.2 -1.8 1.2Z" fill="#d6d6d6"/><path d="M-8 -5.4 h4 M-8 -3 h4 M-8 -0.6 h4" stroke="#d6d6d6" stroke-width="0.9" stroke-dasharray="1 0.6"/></g><g transform="translate(507.7,159)"><circle cx="-2.4" cy="-1.8" r="2.9" fill="none" stroke="#d6d6d6" stroke-width="1"/><path d="M-2.4 -5.6 v7.6 M-6.2 -1.8 h7.6" stroke="#d6d6d6" stroke-width="0.7"/><rect x="2.6" y="-5" width="3.4" height="2.4" fill="#d6d6d6"/><rect x="2.6" y="-1.6" width="3.4" height="2.4" fill="#d6d6d6"/><rect x="-6" y="3.2" width="12" height="2.4" fill="#d6d6d6"/></g><g fill="none" stroke="#d6d6d6" stroke-width="1.2"><path d="M504.4 183 V193.8 H515.6"/><path d="M500.6 186.8 H511.8 V197.6"/></g><rect x="524" y="51.5" width="168" height="20" fill="#424242"/><rect x="524" y="51.5" width="29.8" height="20" fill="#535353"/><rect x="555" y="51.5" width="29" height="20" fill="#484848"/><rect x="524" y="71.5" width="168" height="88.5" fill="#535353"/><rect x="524" y="160" width="168" height="2.6" fill="#3c3c3c"/><rect x="539.2" y="87.8" width="13.4" height="13.2" fill="#fff"/><rect x="531.4" y="80.2" width="13.8" height="13" fill="#000" stroke="#d8d8d8" stroke-width="1"/><defs><linearGradient id="cf1" x1="0" x2="1" y1="0" y2="0"><stop offset="0" stop-color="#fff"/><stop offset="1" stop-color="#f00"/></linearGradient><linearGradient id="cf2" x1="0" x2="0" y1="0" y2="1"><stop offset="0" stop-color="#000" stop-opacity="0"/><stop offset="1" stop-color="#000"/></linearGradient><linearGradient id="hue" x1="0" x2="0" y1="0" y2="1"><stop offset="0" stop-color="#f00"/><stop offset="0.167" stop-color="#f0f"/><stop offset="0.333" stop-color="#00f"/><stop offset="0.5" stop-color="#0ff"/><stop offset="0.667" stop-color="#0f0"/><stop offset="0.833" stop-color="#ff0"/><stop offset="1" stop-color="#f00"/></linearGradient></defs><rect x="558" y="77.3" width="107.5" height="78.7" fill="url(#cf1)"/><rect x="558" y="77.3" width="107.5" height="78.7" fill="url(#cf2)"/><rect x="678" y="77.3" width="14" height="78.7" fill="url(#hue)"/><circle cx="560" cy="155.2" r="2.4" fill="none" stroke="#fff" stroke-width="0.9"/><path d="M672 153.4 L676.6 156 L672 158.6 Z" fill="#e8e8e8"/><rect x="524" y="162.6" width="168" height="21.4" fill="#424242"/><rect x="524" y="162.6" width="30.4" height="21.4" fill="#535353"/><rect x="555.6" y="162.6" width="28.6" height="21.4" fill="#484848"/><rect x="585.4" y="162.6" width="29.6" height="21.4" fill="#484848"/><rect x="524" y="184" width="168" height="322" fill="#535353"/><rect x="528" y="190.8" width="56" height="12.4" rx="2" fill="#4a4a4a" stroke="#5e5e5e" stroke-width="0.7"/><g fill="none" stroke="#8c8c8c" stroke-width="1.1"><circle cx="537.6" cy="196" r="2.4"/><path d="M535.8 197.8 L533.4 200.4"/></g><path d="M576.8 196.10000000000002 L579 198.20000000000002 L581.2 196.10000000000002" fill="none" stroke="#666" stroke-width="0.9" stroke-linecap="round" stroke-linejoin="round"/><rect x="594.6" y="193.2" width="9" height="7.2" fill="none" stroke="#b4b4b4" stroke-width="1"/><path d="M596 199 l2 -2.4 l1.6 1.6 l1.2 -1 l1.6 1.8Z" fill="#b4b4b4"/><circle cx="617" cy="196.8" r="4" fill="none" stroke="#b4b4b4" stroke-width="1"/><path d="M614.2 199.6 A4 4 0 0 1 619.8 194 Z" fill="#b4b4b4"/><rect x="650.2" y="193.8" width="7" height="6" fill="none" stroke="#b4b4b4" stroke-width="1"/><rect x="649" y="192.6" width="2.4" height="2.4" fill="#b4b4b4"/><rect x="656" y="192.6" width="2.4" height="2.4" fill="#b4b4b4"/><rect x="649" y="198.6" width="2.4" height="2.4" fill="#b4b4b4"/><rect x="656" y="198.6" width="2.4" height="2.4" fill="#b4b4b4"/><path d="M668.6 192.4 h4.6 l2.6 2.6 v6 h-7.2 Z" fill="none" stroke="#b4b4b4" stroke-width="1"/><rect x="671.4" y="197" width="4.4" height="3.8" fill="#b4b4b4"/><circle cx="692" cy="196" r="3.6" fill="#6e6e6e"/><rect x="523" y="206.4" width="169" height="0.8" fill="#494949"/><rect x="528" y="211" width="82" height="12.6" rx="2" fill="#4b4b4b" stroke="#5c5c5c" stroke-width="0.7"/><path d="M602.4 216.70000000000002 L604.6 218.8 L606.8000000000001 216.70000000000002" fill="none" stroke="#6c6c6c" stroke-width="0.9" stroke-linecap="round" stroke-linejoin="round"/><rect x="655" y="211" width="27.6" height="12.6" rx="1.5" fill="#4b4b4b" stroke="#5c5c5c" stroke-width="0.7"/><rect x="684.6" y="211" width="10" height="12.6" rx="1.5" fill="#4b4b4b" stroke="#5c5c5c" stroke-width="0.7"/><rect x="523" y="226.6" width="169" height="0.8" fill="#494949"/><rect x="552.4" y="233.2" width="8.4" height="8.4" fill="none" stroke="#bebebe" stroke-width="0.9"/><path d="M552.4 233.2 h2.8 v2.8 h-2.8Z M558 233.2 h2.8 v2.8 h-2.8Z M555.2 236 h2.8 v2.8 h-2.8Z M552.4 238.8 h2.8 v2.8 h-2.8Z M558 238.8 h2.8 v2.8 h-2.8Z" fill="#bebebe"/><g transform="translate(573.6,237.4) scale(0.82)"><path d="M5.8 -6 L6.8 -5 L0.8 2 L-1 0.4 Z" fill="#bebebe"/><path d="M-1.8 1.2 L0 3 Q-2 6.4 -5.8 6 Q-3.6 4.6 -4 3 Q-3.6 1.2 -1.8 1.2Z" fill="#bebebe"/></g><g transform="translate(589,237.4) scale(0.78)" fill="#8c8c8c" stroke="none"><path d="M0-6.5 L2.2-3.8 H0.6 V-0.6 H3.8 V-2.2 L6.5 0 L3.8 2.2 V0.6 H0.6 V3.8 H2.2 L0 6.5 L-2.2 3.8 H-0.6 V0.6 H-3.8 V2.2 L-6.5 0 L-3.8-2.2 V-0.6 H-0.6 V-3.8 H-2.2 Z"/></g><path d="M601.4 233.4 v6.2 h9.6 M603.4 233 h5 l1.8 2.2 v2.6" fill="none" stroke="#bebebe" stroke-width="1"/><rect x="619" y="236.6" width="7.8" height="5.6" rx="0.8" fill="#bebebe"/><path d="M620.8 236.6 v-1.6 a2.1 2.1 0 0 1 4.2 0 v1.6" fill="none" stroke="#bebebe" stroke-width="1"/><rect x="655" y="231.2" width="27.6" height="12.6" rx="1.5" fill="#4b4b4b" stroke="#5c5c5c" stroke-width="0.7"/><rect x="684.6" y="231.2" width="10" height="12.6" rx="1.5" fill="#4b4b4b" stroke="#5c5c5c" stroke-width="0.7"/><rect x="523" y="248.6" width="169" height="0.8" fill="#454545"/><rect x="547" y="249.4" width="145" height="20" fill="#6b6b6b"/><rect x="523" y="269.4" width="169" height="0.8" fill="#454545"/><rect x="546.2" y="249.4" width="0.8" height="20" fill="#454545"/><rect x="550" y="251.2" width="23.6" height="15.6" fill="#fff" stroke="#d0d0d0" stroke-width="0.6"/><path d="M530.2 258.8 Q535.4 253 540.6 258.8 Q535.4 264.6 530.2 258.8Z" fill="#e8e8e8"/><circle cx="535.4" cy="258.8" r="1.9" fill="#535353"/><circle cx="535.4" cy="258.8" r="0.9" fill="#e8e8e8"/><rect x="673.4" y="257.4" width="7.2" height="5" rx="0.8" fill="none" stroke="#dcdcdc" stroke-width="1"/><path d="M675.1 257.4 v-1.4 a1.9 1.9 0 0 1 3.8 0 v1.4" fill="none" stroke="#dcdcdc" stroke-width="1"/><rect x="676.4" y="259" width="1.2" height="1.8" fill="#dcdcdc"/><g fill="none" stroke="#8e8e8e" stroke-width="1.1"><rect x="550.6" y="494" width="6" height="4.2" rx="2.1"/><rect x="555.2" y="494" width="6" height="4.2" rx="2.1"/></g><rect x="592.4" y="492.2" width="9.6" height="7.6" fill="#d6d6d6"/><circle cx="597.2" cy="496" r="2.3" fill="#535353"/><circle cx="618" cy="496.2" r="4" fill="none" stroke="#d6d6d6" stroke-width="1"/><path d="M615.2 499 A4 4 0 0 1 620.8 493.4 Z" fill="#d6d6d6"/><path d="M624 501 h2.6 l-1.3 1.6Z" fill="#d6d6d6"/><path d="M633.2 492.4 h3.6 l1 1.2 h5.4 v6.4 h-10 Z" fill="#d6d6d6"/><path d="M655.2 492.6 h7.4 v7 h-4.4 l-3 -2.8 Z" fill="none" stroke="#d6d6d6" stroke-width="1.1"/><path d="M655.2 496.8 h3 v2.8Z" fill="#d6d6d6"/><path d="M675 494 h7.4 M677.4 494 v-1.2 h2.6 v1.2" fill="none" stroke="#8e8e8e" stroke-width="1"/><path d="M675.8 495 h5.8 l-0.5 5.4 h-4.8 Z" fill="#8e8e8e"/></svg>
<div class="t" style="left:530.4px;top:56.4px;font-size:8.2px;color:#eaeaea;">颜色</div>
<div class="t" style="left:561px;top:56.4px;font-size:8.2px;color:#b8b8b8;">色板</div>
<div class="t" style="left:530.8px;top:167.6px;font-size:8.2px;color:#eaeaea;">图层</div>
<div class="t" style="left:561.4px;top:167.6px;font-size:8.2px;color:#adadad;">通道</div>
<div class="t" style="left:592px;top:167.6px;font-size:8.2px;color:#adadad;">路径</div>
<div class="t" style="left:542px;top:191.6px;font-size:8.2px;color:#7e7e7e;">类型</div>
<div class="t" style="left:531.4px;top:212px;font-size:8.2px;color:#8a8a8a;">正常</div>
<div class="t" style="left:615.4px;top:212px;font-size:8.2px;color:#8a8a8a;">不透明度:</div>
<div class="t" style="left:658px;top:212.4px;font-size:8px;color:#6e6e6e;">100%</div>
<div class="t" style="left:528px;top:232px;font-size:8.2px;color:#8a8a8a;">锁定:</div>
<div class="t" style="left:632.4px;top:232px;font-size:8.2px;color:#8a8a8a;">填充:</div>
<div class="t" style="left:658px;top:232.6px;font-size:8px;color:#6e6e6e;">100%</div>
<div class="t" style="left:580px;top:254px;font-size:7.8px;color:#f0f0f0;">背景</div>
<div class="t" style="left:631px;top:189.8px;font-size:11px;color:#b4b4b4;font-family:'Liberation Serif',serif;line-height:13px;font-weight:bold">T</div>
<div class="t" style="left:506.4px;top:185px;font-size:7px;color:#d6d6d6;line-height:8px;font-weight:bold">c</div>
<div class="t" style="left:572.4px;top:489.6px;font-size:10px;color:#8e8e8e;font-style:italic;font-family:'Liberation Serif',serif">fx</div>
<!-- watermark -->
<div class="abs" style="left:494px;top:397px;width:173px;height:84px;background:#fff"></div>
<div class="t" style="left:515.4px;top:414.6px;font-size:31px;line-height:36px;color:#20c03c;font-weight:500;-webkit-text-stroke:0.55px #20c03c;letter-spacing:1.3px">百科全说</div>
<div class="t" style="left:524.4px;top:452px;font-size:18px;line-height:22px;color:#8c8c8c;font-weight:400">助你轻松解决</div>
</div>
</body></html>
